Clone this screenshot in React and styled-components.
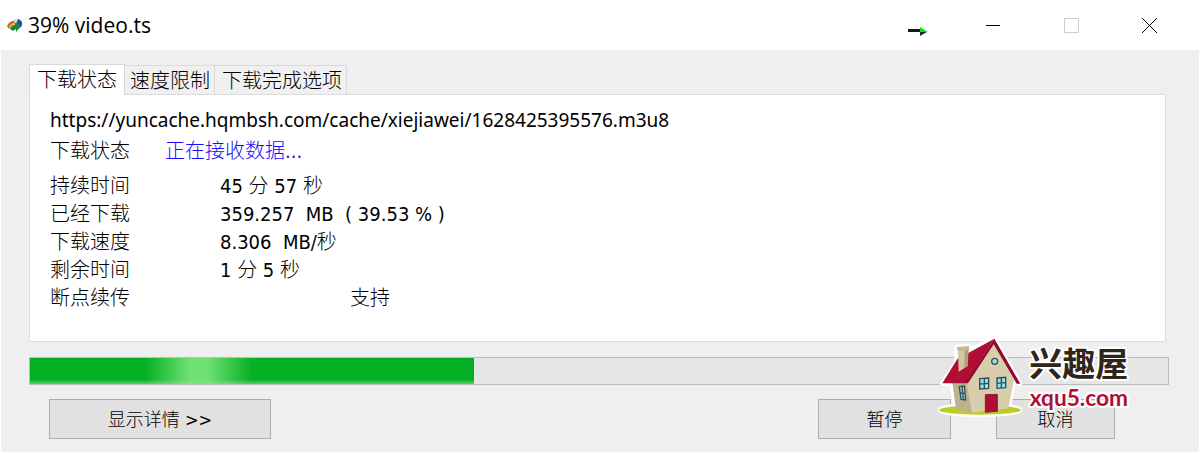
import React, {useState} from 'react';
import styled, {createGlobalStyle} from 'styled-components';

const GlobalStyle = createGlobalStyle`
    * {
        box-sizing: border-box;
    }

    body {
        margin: 0;
        background: #fff;
        color: #000;
        font-family: "DejaVu Sans Condensed", "Noto Sans CJK SC", sans-serif;
        font-size: 20px;
        font-weight: 300;
    }

    button {
        font-family: inherit;
        color: inherit;
    }
`;

const Window = styled.div`
    position: relative;
`;

// title bar
const TitleBar = styled.header`
    display: flex;
    align-items: center;
    height: 50px;
    padding-left: 7px;
`;

const Title = styled.h1`
    flex: 1;
    margin: 0 0 0 5px;
    font-family: "Open Sans", sans-serif;
    font-size: 21px;
    font-weight: 400;
    line-height: 50px;
`;

const WindowControls = styled.div`
    display: flex;
    align-items: center;
    padding-right: 12px;
`;

const WindowButton = styled.button`
    display: flex;
    align-items: center;
    justify-content: center;
    width: 78px;
    height: 50px;
    padding: ${props => props.$tray ? '12px 0 0 6px' : '0'};
    border: none;
    background: none;
`;

const Body = styled.main`
    margin: 0 1px;
    padding: 14px 30px 13px 28px;
    background: #efefef;
`;

// tabs
const TabList = styled.div`
    display: flex;
    align-items: flex-end;
`;

const Tab = styled.button`
    position: relative;
    height: ${props => props.$active ? '31px' : '29px'};
    margin-bottom: ${props => props.$active ? '-1px' : '0'};
    padding: 0 4px 0 ${props => props.$wide ? '7px' : '5px'};
    border: 1px solid #d9d9d9;
    border-width: 1px 1px 0 0;
    background: #f0f0f0;
    font-size: 20px;
    font-weight: 300;
    line-height: 30px;
    white-space: nowrap;

    &[aria-selected='true'] {
        padding: 0 7px;
        border-left-width: 1px;
        background: #fff;
    }
`;

const Panel = styled.section`
    min-height: 248px;
    margin-right: 3px;
    padding: 10px 20px 28px;
    border: 1px solid #dcdcdc;
    background: #fff;
`;

const Url = styled.p`
    margin: 0;
    font-family: "Noto Sans", sans-serif;
    font-size: 19px;
    font-weight: 400;
    line-height: 30px;
`;

const Status = styled.dl`
    display: grid;
    grid-template-columns: 115px 1fr;
    margin: 0 0 5px;
    line-height: 32px;
`;

const Details = styled.dl`
    display: grid;
    grid-template-columns: 170px 1fr;
    margin: 0;
    line-height: 28px;
`;

const Label = styled.dt`
    white-space: nowrap;
`;

const Value = styled.dd`
    margin: 0;
    padding-left: ${props => props.$indent ? '130px' : '0'};
    color: ${props => props.$busy ? '#1a0aff' : '#000'};
    white-space: pre-wrap;
`;

// progress bar
const Track = styled.div`
    height: 28px;
    margin-top: 15px;
    border: 1px solid #bcbcbc;
    background: #e6e6e6;
`;

const Fill = styled.div`
    height: 100%;
    background:
        linear-gradient(to bottom, transparent 84%, rgba(140, 225, 150, 0.5) 96%, rgba(140, 225, 150, 0.5)),
        linear-gradient(to right, transparent 26%, #6fe073 36%, #6fe073 40%, transparent 50%),
        #06b025;
`;

// buttons below the bar
const Footer = styled.footer`
    display: flex;
    gap: 45px;
    padding: 14px 54px 0 20px;
`;

const ActionButton = styled.button`
    width: ${props => props.$width};
    height: 40px;
    margin-right: ${props => props.$first ? 'auto' : '0'};
    padding: 0 0 2px;
    border: 1px solid #adadad;
    background: #e1e1e1;
    font-size: 18px;
    font-weight: 300;
`;

// site logo over the lower right corner
const Logo = styled.svg`
    position: absolute;
    right: 67px;
    bottom: 32px;
    width: 196px;
    height: 84px;
    pointer-events: none;
`;

function AppIcon() {
    return (
        <svg width="16" height="16" viewBox="0 0 16 16" aria-hidden="true">
            <circle cx="10" cy="7" r="5" fill="#3977b8" />
            <path d="M7 3Q9 1 12 2L10 5 7 7 5 6Z" fill="#c9e3ee" />
            <path d="M0 9Q2 4 7 4L8 6Q4 6 4 11L2 12Z" fill="#d8603c" />
            <path d="M2 11Q3 7 8 6L8 8Q5 9 6 13Z" fill="#f1cf3a" />
            <path d="M3 12Q4 8 8 8L8 6 14 9 9 15 9 12 6 14Z" fill="#188a35" />
            <path d="M11 2Q16 4 15 8L13 9 10 5Z" fill="#224f94" />
        </svg>
    );
}

function ArrowIcon() {
    return (
        <svg width="20" height="9" viewBox="0 0 20 9" aria-hidden="true">
            <path d="M0 2H12V5H0Z" fill="#191919" />
            <path d="M12 0V5H20Z" fill="#08e51c" />
            <path d="M12 5H19L12 9Z" fill="#123314" />
        </svg>
    );
}

function SiteLogo() {
    return (
        <Logo viewBox="21 6 588 252" role="img" aria-label="兴趣屋 xqu5.com">
            {/* white edge */}
            <g fill="#fff" stroke="#fff" strokeWidth="14" strokeLinejoin="round">
                <ellipse cx="150" cy="228" rx="121" ry="14" />
                <path d="M37 148L80 86V40L117 36V50L193 14L270 149L250 143L235 225L125 235L78 225L65 150Z" />
            </g>
            <ellipse cx="150" cy="228" rx="123" ry="14" fill="#bccb25" />
            <path d="M67 145H116L126 236L78 225Z" fill="#bdb28c" />
            <path d="M190 28L252 138L235 223L126 236L110 148Z" fill="#d8ceab" />
            <path d="M37 148L82 75L193 14L106 148Z" fill="#b00e35" />
            <path d="M193 14L271 149H260L191 31L114 148H104Z" fill="#930b2b" />
            <path d="M84 47H115L112 97L86 113Z" fill="#d3c69e" />
            <path d="M104 47H116L113 96L103 103Z" fill="#aea27c" />
            <path d="M80 39L117 36V48L82 50Z" fill="#c6ba92" />
            <circle cx="194" cy="82" r="9" fill="#91e5f2" stroke="#424b50" strokeWidth="4" />
            <g fill="#86e4f2" stroke="#374b54" strokeWidth="4">
                <path d="M149 134L176 132V163L149 165Z" />
                <path d="M163 133V164M149 150L176 148" />
                <path d="M201 132L227 130V161L201 163Z" />
                <path d="M214 131V162M201 148L227 146" />
                <path d="M88 158L103 156L107 198L93 196Z" />
                <path d="M96 157L100 197M90 177L105 178" />
            </g>
            <path d="M166 182L202 181V232L166 235Z" fill="#b00e35" stroke="#74283a" strokeWidth="3" />
            <g stroke="#fff" strokeWidth="12" strokeLinejoin="round" paintOrder="stroke">
                <text x="298" y="126" fill="#302519" fontFamily="'Noto Sans CJK SC', sans-serif" fontSize="99" fontWeight="700">兴趣屋</text>
                <text x="299" y="217" fill="#b00e35" fontFamily="Lato, sans-serif" fontSize="68" fontWeight="700">xqu5.com</text>
            </g>
        </Logo>
    );
}

const tabs = [
    {name: '下载状态'},
    {name: '速度限制'},
    {name: '下载完成选项', wide: true},
];

const details = [
    {label: '持续时间', value: '45 分 57 秒'},
    {label: '已经下载', value: '359.257  MB  ( 39.53 % )'},
    {label: '下载速度', value: '8.306  MB/秒'},
    {label: '剩余时间', value: '1 分 5 秒'},
    {label: '断点续传', value: '支持', indent: true},
];

function App() {
    const [tab, setTab] = useState(0);
    const progress = 39;

    return (
        <Window>
            <GlobalStyle />
            <TitleBar>
                <AppIcon />
                <Title>{progress}% video.ts</Title>
                <WindowControls>
                    <WindowButton aria-label="Tray" $tray><ArrowIcon /></WindowButton>
                    <WindowButton aria-label="Minimize">
                        <svg width="14" height="15"><path d="M0 7.500H14" stroke="#000" /></svg>
                    </WindowButton>
                    <WindowButton aria-label="Maximize" disabled>
                        <svg width="15" height="15"><path d="M.5.5H14.500V14.500H.5Z" fill="none" stroke="#ccc" /></svg>
                    </WindowButton>
                    <WindowButton aria-label="Close">
                        <svg width="15" height="15"><path d="M0 0L15 15M15 0L0 15" stroke="#000" /></svg>
                    </WindowButton>
                </WindowControls>
            </TitleBar>

            <Body>
                <TabList role="tablist">
                    {tabs.map((item, i) => (
                        <Tab
                            key={item.name}
                            role="tab"
                            aria-selected={tab === i}
                            $active={tab === i}
                            $wide={item.wide}
                            onClick={() => setTab(i)}
                        >
                            {item.name}
                        </Tab>
                    ))}
                </TabList>

                <Panel role="tabpanel">
                    <Url>https://yuncache.hqmbsh.com/cache/xiejiawei/1628425395576.m3u8</Url>
                    <Status>
                        <Label>下载状态</Label>
                        <Value $busy>正在接收数据...</Value>
                    </Status>
                    <Details>
                        {details.map(row => (
                            <React.Fragment key={row.label}>
                                <Label>{row.label}</Label>
                                <Value $indent={row.indent}>{row.value}</Value>
                            </React.Fragment>
                        ))}
                    </Details>
                </Panel>

                <Track role="progressbar" aria-label="下载状态" aria-valuenow={progress}>
                    <Fill style={{width: `${progress}%`}} />
                </Track>

                <Footer>
                    <ActionButton $width="222px" $first>显示详情 &gt;&gt;</ActionButton>
                    <ActionButton $width="133px">暂停</ActionButton>
                    <ActionButton $width="119px">取消</ActionButton>
                </Footer>
            </Body>
            <SiteLogo />
        </Window>
    );
}

export default App;
